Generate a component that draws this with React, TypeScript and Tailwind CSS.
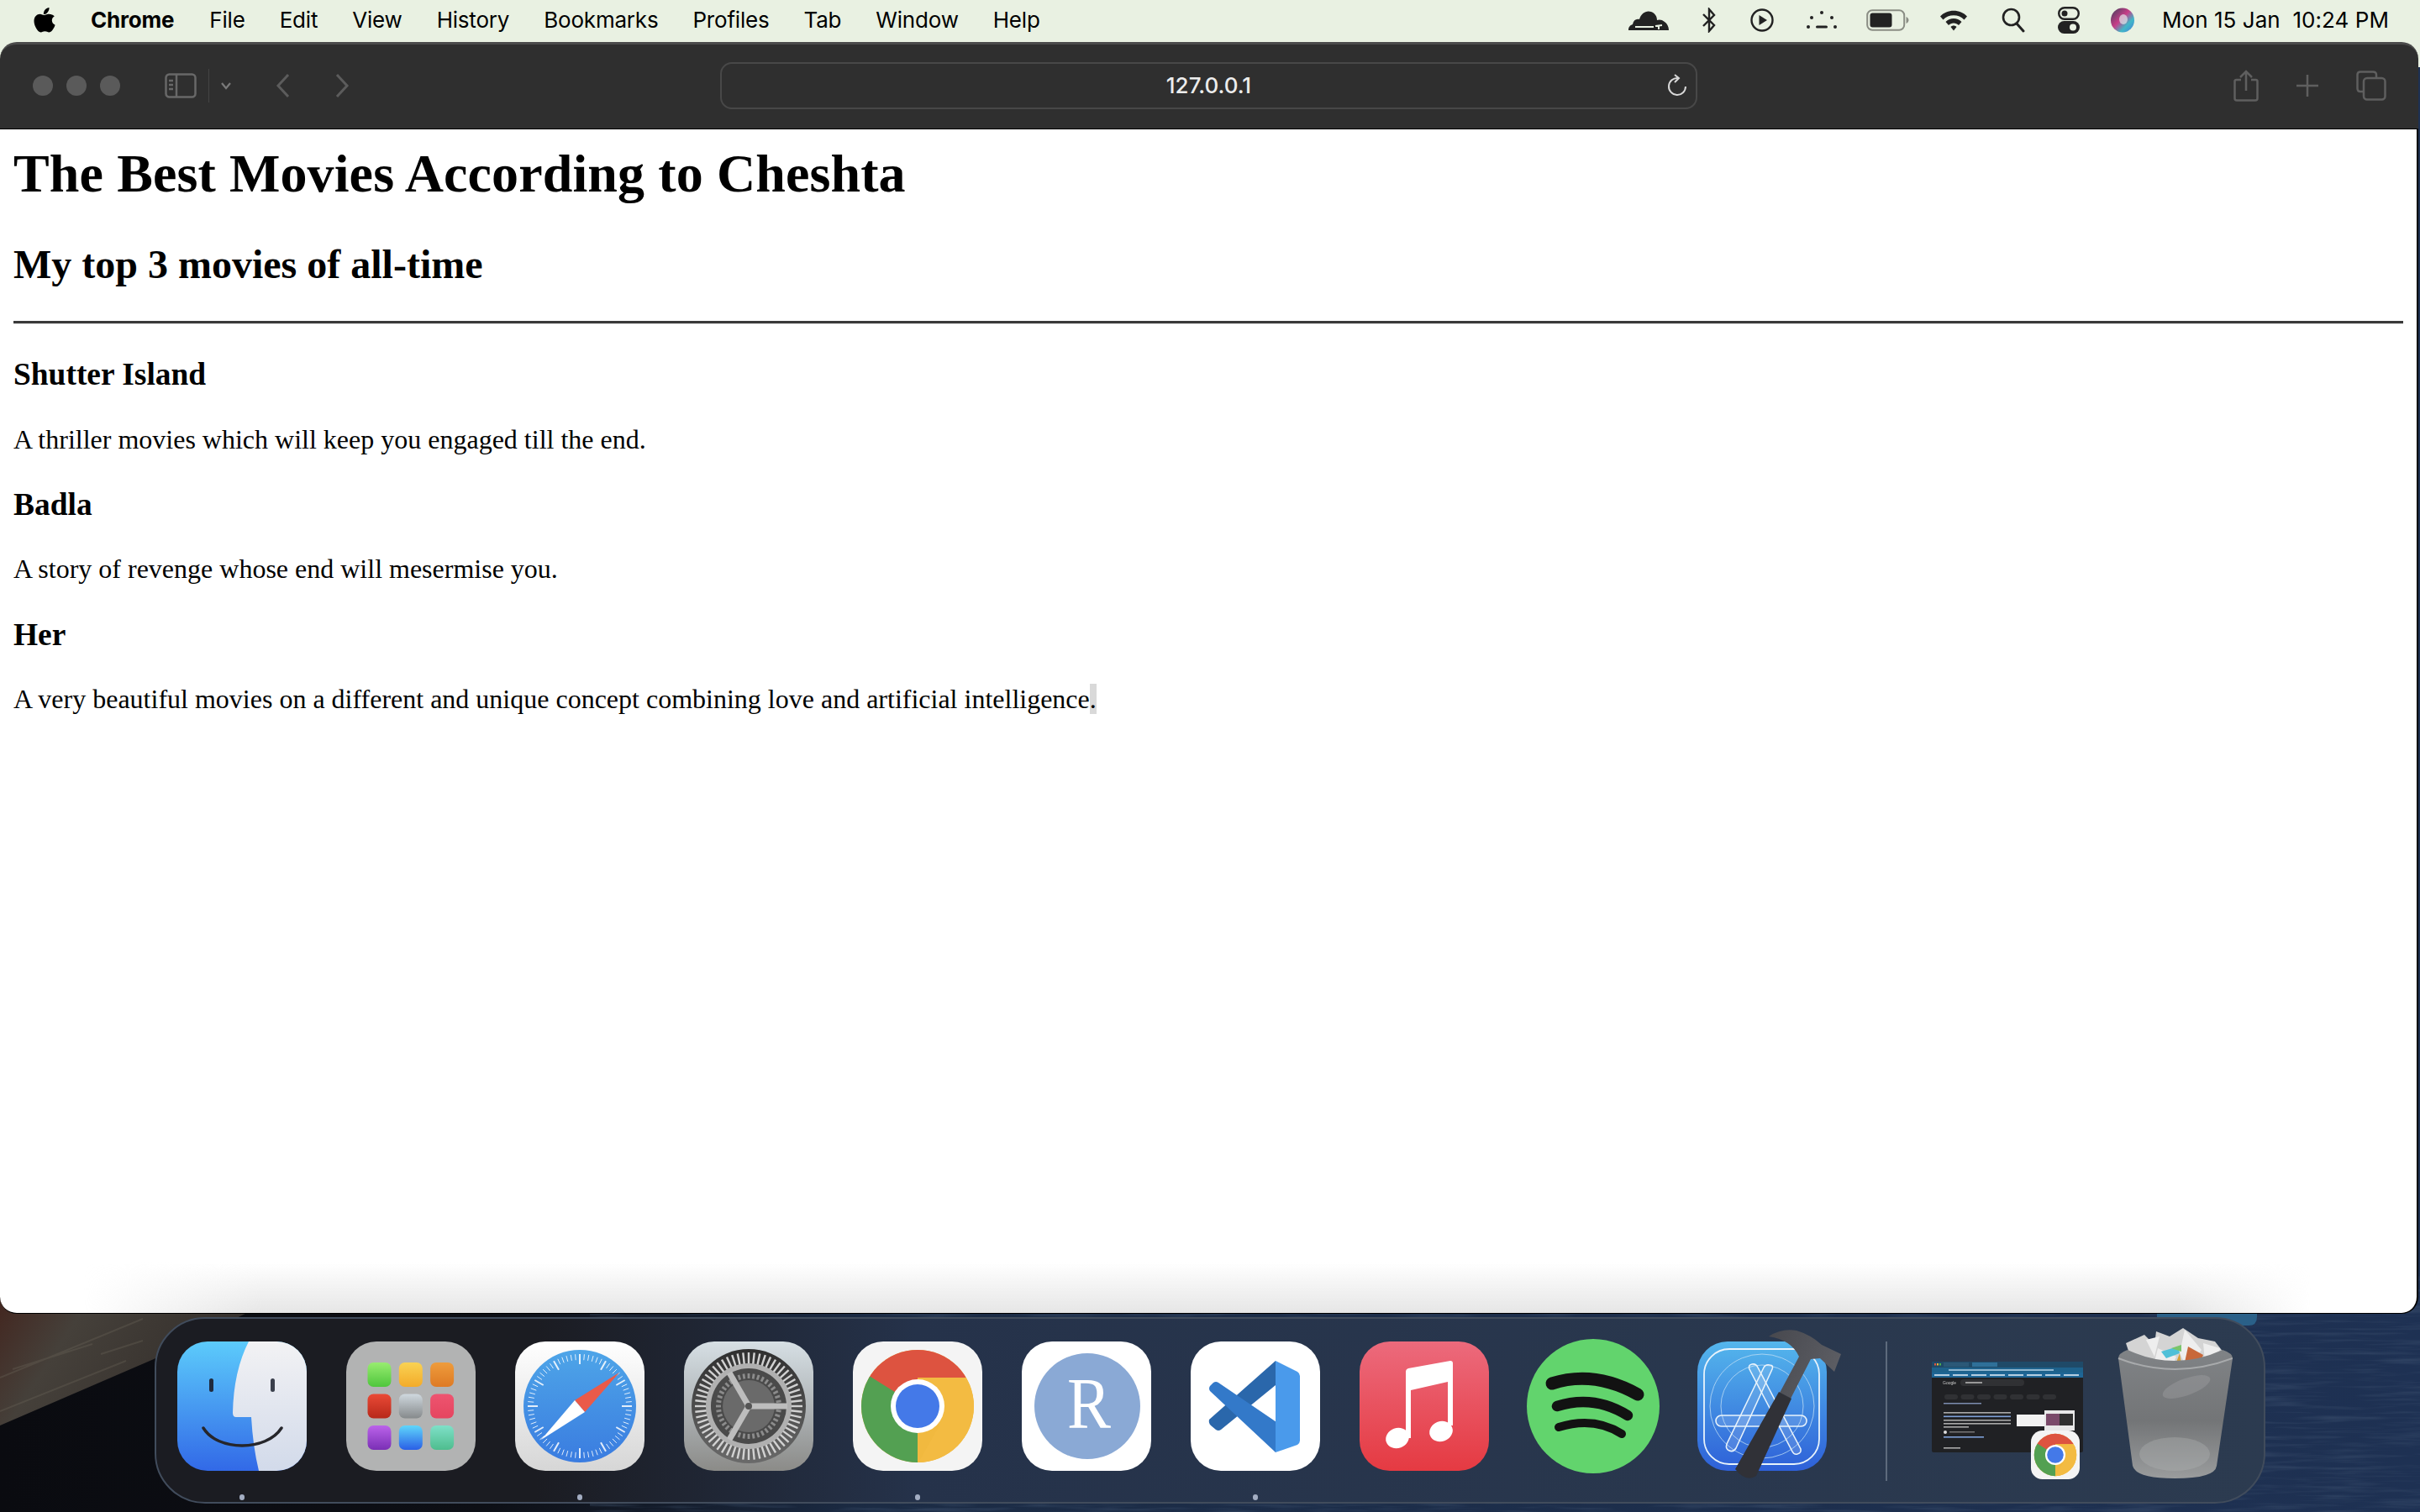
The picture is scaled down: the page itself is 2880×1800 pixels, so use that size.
import type { ReactNode } from 'react';

const menus = ['File', 'Edit', 'View', 'History', 'Bookmarks', 'Profiles', 'Tab', 'Window', 'Help'];

const padColors = [
  ['#98ec70', '#4fc63d'], ['#f9d253', '#f3ab2a'], ['#ee9c3c', '#de7a24'],
  ['#ea4a36', '#b7281a'], ['#cfd8de', '#868a8c'], ['#ee5470', '#e5455f'],
  ['#bb63ea', '#7a2fb5'], ['#5fd6fb', '#2a5fe6'], ['#7fe0c8', '#4ebd8e'],
];

function range(n: number) {
  return Array.from({ length: n }, (_, i) => i);
}

function polar(r: number, deg: number, c = 77) {
  const a = (deg * Math.PI) / 180;
  return { x: c + r * Math.cos(a), y: c + r * Math.sin(a) };
}

function Wallpaper() {
  return (
    <svg className="absolute inset-0" width="2880" height="1800" viewBox="0 0 2880 1800">
      <defs>
        <linearGradient id="wall" x1="0" x2="1" y1="0" y2="0">
          <stop offset="0" stopColor="#0a0b10" />
          <stop offset="0.2" stopColor="#0d0f15" />
          <stop offset="0.36" stopColor="#1b2b44" />
          <stop offset="1" stopColor="#1e3153" />
        </linearGradient>
        <linearGradient id="wood" x1="0" x2="1" y1="0" y2="0.3">
          <stop offset="0" stopColor="#43261f" />
          <stop offset="0.3" stopColor="#45403a" />
          <stop offset="1" stopColor="#302b28" />
        </linearGradient>
        <filter id="grain">
          <feTurbulence type="fractalNoise" baseFrequency="0.012 0.22" numOctaves="3" />
          <feColorMatrix values="0 0 0 0 0.06  0 0 0 0 0.1  0 0 0 0 0.18  0 0 0 1.6 -0.72" />
        </filter>
      </defs>
      <rect width="2880" height="1800" fill="url(#wall)" />
      <rect x="900" y="1540" width="1980" height="260" filter="url(#grain)" opacity="0.6" />
      <path d="M0 1540H340L183 1618L0 1697Z" fill="url(#wood)" />
      <path d="M0 1640L170 1570M15 1630L110 1600M0 1680L150 1620M120 1612L170 1596" stroke="#6a645a" strokeWidth="2" fill="none" opacity="0.35" />
      <path d="M2567 1560H2686V1568Q2686 1578 2676 1578H2567Z" fill="#2a6088" />
      <rect width="2880" height="80" fill="#e9f1e2" />
    </svg>
  );
}

function AppleLogo() {
  return (
    <svg width="26" height="32" viewBox="0 0 26 32">
      <path d="M18.5 1c.2 2.400-.7 4.300-1.900 5.700-1.200 1.500-3 2.500-4.700 2.300-.3-2.200.7-4.300 1.800-5.600C15 2 17 1 18.500 1Z" fill="#000" />
      <path d="M24.800 11.200c-1.700 1.100-3 2.800-3 5.100 0 2.700 1.700 4.600 3.800 5.400-.5 1.600-1.300 3.300-2.300 4.800-1.300 1.900-2.700 3.900-4.800 3.900-2 0-2.700-1.200-5-1.200-2.400 0-3.100 1.200-5 1.200-2.100 0-3.500-1.900-4.900-3.900C1.800 24 .5 20.500.5 17.100c0-5.400 3.500-8.300 7-8.300 2 0 3.600 1.300 4.800 1.300 1.200 0 3.100-1.400 5.300-1.400 1 0 4.600.1 7.200 2.500Z" fill="#000" />
    </svg>
  );
}

function MenuBar() {
  return (
    <div className="relative flex h-[48px] items-center text-[26px] leading-[32px] tracking-[-0.2px] text-black [font-family:Inter,'Liberation_Sans',sans-serif]">
      <div className="ml-[40px] w-[68px]">
        <AppleLogo />
      </div>
      <span className="mr-[42px] font-bold">Chrome</span>
      <div className="flex gap-[41px]">
        {menus.map((m) => (
          <span key={m}>{m}</span>
        ))}
      </div>
      <div className="ml-auto mr-[37px] flex items-center">
        <svg width="48" height="26" viewBox="0 0 48 26">
          <path d="M0 25c0-4 2-6 5-7 1-5 4-7 8-6 2-7 8-11 14-9 5 2 7 6 7 10 2-1 6-1 9 2 3 2 5 6 5 10Z" fill="#222" />
          <path d="M8 21H30M32 20l8-1M36 19v5" stroke="#e9f1e2" strokeWidth="2" fill="none" />
        </svg>
        <svg className="ml-[40px]" width="16" height="30" viewBox="0 0 16 30">
          <path d="M1 8L14 21L8 28V2L14 9L1 22" stroke="#222" strokeWidth="2.400" fill="none" />
        </svg>
        <svg className="ml-[41px]" width="28" height="28" viewBox="0 0 28 28">
          <circle cx="14" cy="14" r="12.500" stroke="#222" strokeWidth="2.400" fill="none" />
          <path d="M10.500 8L20 14L10.500 20Z" fill="#222" />
        </svg>
        <svg className="ml-[39px]" width="36" height="26" viewBox="0 0 36 26">
          <circle cx="18" cy="4" r="2" fill="#222" />
          <circle cx="6" cy="10" r="2" fill="#222" />
          <circle cx="30" cy="10" r="2" fill="#222" />
          <circle cx="2" cy="21" r="2" fill="#222" />
          <circle cx="34" cy="21" r="2" fill="#222" />
          <rect x="11" y="19.500" width="14" height="3" rx="1.500" fill="#222" />
        </svg>
        <svg className="ml-[35px]" width="51" height="26" viewBox="0 0 51 26">
          <rect x="1.200" y="1.200" width="44" height="23.600" rx="6" stroke="#8a8d84" strokeWidth="2" fill="none" />
          <rect x="4.500" y="4.500" width="26" height="17" rx="3" fill="#222" />
          <path d="M47.500 9c2 1 3 2.500 3 4s-1 3-3 4Z" fill="#8a8d84" />
        </svg>
        <svg className="ml-[36px]" width="34" height="26" viewBox="0 0 34 26">
          <path d="M1 8.500C9-.5 25-.5 33 8.500L29.500 12.500C23.500 5.500 10.500 5.500 4.500 12.500Z" fill="#222" />
          <path d="M7.500 15C12.500 9.500 21.500 9.500 26.500 15L23 19C20 15.500 14 15.500 11 19Z" fill="#222" />
          <path d="M13.500 21C15.500 19 18.500 19 20.500 21L17 25.500Z" fill="#222" />
        </svg>
        <svg className="ml-[40px]" width="28" height="30" viewBox="0 0 28 30">
          <circle cx="11.500" cy="11.500" r="9.500" stroke="#222" strokeWidth="2.600" fill="none" />
          <path d="M18 19L26 28" stroke="#222" strokeWidth="3" strokeLinecap="round" />
        </svg>
        <svg className="ml-[39px]" width="26" height="32" viewBox="0 0 26 32">
          <rect x="1.200" y="1.200" width="23.600" height="13.600" rx="6.800" stroke="#222" strokeWidth="2.400" fill="none" />
          <circle cx="8" cy="8" r="3.500" fill="#222" />
          <rect y="17" width="26" height="15" rx="7.500" fill="#222" />
          <circle cx="18" cy="24.500" r="4" fill="#e9f1e2" />
        </svg>
        <svg className="ml-[37px]" width="28" height="30" viewBox="0 0 28 30">
          <defs>
            <linearGradient id="siri" x1="0" x2="1" y1="0" y2="1">
              <stop offset="0" stopColor="#3c3f5a" />
              <stop offset="0.45" stopColor="#c83d88" />
              <stop offset="0.7" stopColor="#3fb8c8" />
              <stop offset="1" stopColor="#4a78d8" />
            </linearGradient>
          </defs>
          <ellipse cx="14" cy="15" rx="14" ry="14.500" fill="url(#siri)" />
          <ellipse cx="15" cy="14" rx="5" ry="6" fill="#dfe8ea" opacity="0.7" />
        </svg>
        <span className="ml-[33px] w-[270px] whitespace-pre text-[26px] tracking-[0.05px]">Mon 15 Jan  10:24 PM</span>
      </div>
    </div>
  );
}

function Toolbar() {
  return (
    <div className="flex h-[104px] items-center rounded-t-[20px] border-t-[3px] border-b border-t-[#4b4b4b] border-b-black bg-[#2f2f2f] pb-[3px]">
      <div className="flex w-[857px] items-center">
        <div className="ml-[39px] flex gap-[16px]">
          <div className="h-[24px] w-[24px] rounded-full bg-[#5a5a5a]" />
          <div className="h-[24px] w-[24px] rounded-full bg-[#5a5a5a]" />
          <div className="h-[24px] w-[24px] rounded-full bg-[#5a5a5a]" />
        </div>
        <svg className="ml-[53px]" width="38" height="30" viewBox="0 0 38 30">
          <rect x="1.500" y="1.500" width="35" height="27" rx="4" stroke="#686868" strokeWidth="2.500" fill="none" />
          <path d="M14 2V28" stroke="#686868" strokeWidth="2.500" />
          <path d="M5 9H10M5 14H10M5 19H10" stroke="#686868" strokeWidth="2.500" />
        </svg>
        <div className="ml-[14px] h-[40px] w-px bg-[#444]" />
        <svg className="ml-[13px]" width="14" height="10" viewBox="0 0 14 10">
          <path d="M2 2L7 8L12 2" stroke="#7a7a7a" strokeWidth="2.200" fill="none" />
        </svg>
        <svg className="ml-[52px]" width="18" height="30" viewBox="0 0 18 30">
          <path d="M15 2L3 15L15 28" stroke="#5c5c5c" strokeWidth="3" fill="none" />
        </svg>
        <svg className="ml-[52px]" width="18" height="30" viewBox="0 0 18 30">
          <path d="M3 2L15 15L3 28" stroke="#5c5c5c" strokeWidth="3" fill="none" />
        </svg>
      </div>
      <div className="relative flex h-[56px] w-[1163px] items-center justify-center rounded-[14px] border-2 border-[#484848] text-[26px] font-medium text-[#ececec] [font-family:Inter,'Liberation_Sans',sans-serif]">
        127.0.0.1
        <svg className="absolute right-[10px] top-[12px]" width="24" height="30" viewBox="0 0 24 30">
          <path d="M13 5A10 10 0 1 0 22 15" stroke="#d8d8d8" strokeWidth="2" fill="none" />
          <path d="M9 1L14 5L9 10" stroke="#d8d8d8" strokeWidth="2" fill="none" />
        </svg>
      </div>
      <div className="flex flex-1 items-center justify-end pr-[38px]">
        <svg width="30" height="38" viewBox="0 0 30 38">
          <path d="M9 12H3.500Q1.500 12 1.500 14V34Q1.500 36.500 4 36.500H26Q28.500 36.500 28.500 34V14Q28.500 12 26.500 12H21" stroke="#5f5f5f" strokeWidth="2.500" fill="none" />
          <path d="M15 25V2M8 9L15 2L22 9" stroke="#5f5f5f" strokeWidth="2.500" fill="none" />
        </svg>
        <svg className="ml-[44px]" width="28" height="28" viewBox="0 0 28 28">
          <path d="M14 1V27M1 14H27" stroke="#5f5f5f" strokeWidth="2.500" />
        </svg>
        <svg className="ml-[44px]" width="36" height="36" viewBox="0 0 36 36">
          <path d="M8 25H5Q1.500 25 1.500 21V5Q1.500 1.500 5 1.500H20Q24 1.500 24 5V9" stroke="#5f5f5f" strokeWidth="2.500" fill="none" />
          <rect x="9" y="9" width="25.500" height="25.500" rx="4" stroke="#5f5f5f" strokeWidth="2.500" fill="none" />
        </svg>
      </div>
    </div>
  );
}

function Page() {
  return (
    <div className="relative flex-1 overflow-hidden rounded-b-[20px] border-b border-r-2 border-black bg-white font-['Liberation_Serif',serif] text-black">
      <div className="px-[16px] pt-[16px]">
        <h1 className="text-[64px] font-bold leading-[74px] tracking-[0.11px]">The Best Movies According to Cheshta</h1>
        <h2 className="mt-[43px] text-[48px] font-bold leading-[55px]">My top 3 movies of all-time</h2>
        <hr className="mt-[40px] h-[4px] border-0 border-t-[3px] border-t-[#3a3a3a] bg-[#ddd]" />
        <h3 className="mt-[38px] text-[37.44px] font-bold leading-[43px]">Shutter Island</h3>
        <p className="mt-[38px] text-[32px] leading-[37px]">A thriller movies which will keep you engaged till the end.</p>
        <h3 className="mt-[37px] text-[37.44px] font-bold leading-[43px]">Badla</h3>
        <p className="mt-[37px] text-[32px] leading-[37px]">A story of revenge whose end will mesermise you.</p>
        <h3 className="mt-[38px] text-[37.44px] font-bold leading-[43px]">Her</h3>
        <p className="mt-[37px] text-[32px] leading-[37px]">
          A very beautiful movies on a different and unique concept combining love and artificial intelligence
          <span className="bg-[#d9d9d9]">.</span>
        </p>
      </div>
      {/* dock shadow on the window */}
      <div className="absolute bottom-0 left-[100px] h-[60px] w-[2650px] bg-gradient-to-t from-[#e6e6e6] to-transparent [mask-image:linear-gradient(90deg,transparent,black_8%,black_94%,transparent)]" />
    </div>
  );
}

function Finder() {
  return (
    <svg width="154" height="154" viewBox="0 0 154 154">
      <defs>
        <linearGradient id="fb" x1="0" x2="0" y1="0" y2="1">
          <stop offset="0" stopColor="#5ccbfb" />
          <stop offset="1" stopColor="#3269e7" />
        </linearGradient>
        <linearGradient id="fw" x1="0" x2="0" y1="0" y2="1">
          <stop offset="0" stopColor="#f2f2f4" />
          <stop offset="1" stopColor="#d2daea" />
        </linearGradient>
        <clipPath id="fc">
          <rect width="154" height="154" rx="36" />
        </clipPath>
      </defs>
      <g clipPath="url(#fc)">
        <rect width="154" height="154" fill="url(#fb)" />
        <path d="M85 0H154V154H97Q90 125 88 90H70Q66 90 66 85Q67 35 85 0Z" fill="url(#fw)" />
        <rect x="38" y="44" width="5" height="16" rx="2.500" fill="#1f2a3e" />
        <rect x="111" y="44" width="5" height="16" rx="2.500" fill="#3a3f4c" />
        <path d="M31 103C48 131 106 131 124 103" stroke="#26262b" strokeWidth="3.500" strokeLinecap="round" fill="none" />
      </g>
    </svg>
  );
}

function Launchpad() {
  return (
    <svg width="154" height="154" viewBox="0 0 154 154">
      <defs>
        {padColors.map((c, i) => (
          <linearGradient key={i} id={`pad${i}`} x1="0" x2="0" y1="0" y2="1">
            <stop offset="0" stopColor={c[0]} />
            <stop offset="1" stopColor={c[1]} />
          </linearGradient>
        ))}
      </defs>
      <rect width="154" height="154" rx="36" fill="#b2b3b3" />
      {padColors.map((_, i) => (
        <rect
          key={i}
          x={25.5 + (i % 3) * 37.3}
          y={25 + Math.floor(i / 3) * 37.5}
          width="28"
          height="29"
          rx="7"
          fill={`url(#pad${i})`}
        />
      ))}
    </svg>
  );
}

function Safari() {
  return (
    <svg width="154" height="154" viewBox="0 0 154 154">
      <defs>
        <linearGradient id="sb" x1="0" x2="0" y1="0" y2="1">
          <stop offset="0" stopColor="#ffffff" />
          <stop offset="1" stopColor="#d6d6d6" />
        </linearGradient>
        <linearGradient id="sc" x1="0" x2="0" y1="0" y2="1">
          <stop offset="0" stopColor="#4ea5e8" />
          <stop offset="1" stopColor="#3a7ce0" />
        </linearGradient>
      </defs>
      <rect width="154" height="154" rx="36" fill="url(#sb)" />
      <circle cx="77" cy="77" r="67" fill="url(#sc)" />
      {range(72).map((i) => {
        const a = polar(62, i * 5);
        const b = polar(i % 6 === 0 ? 50 : 55, i * 5);
        return <line key={i} x1={a.x} y1={a.y} x2={b.x} y2={b.y} stroke="#fff" strokeWidth={i % 6 === 0 ? 2 : 1} opacity="0.85" />;
      })}
      <path d="M124 37L71 70L83 84Z" fill="#ea5a49" />
      <path d="M31 117L71 70L83 84Z" fill="#fff" />
    </svg>
  );
}

function Settings() {
  return (
    <svg width="154" height="154" viewBox="0 0 154 154">
      <defs>
        <linearGradient id="gb" x1="0" x2="0" y1="0" y2="1">
          <stop offset="0" stopColor="#d6dfe4" />
          <stop offset="0.6" stopColor="#a9adaf" />
          <stop offset="1" stopColor="#8b8b88" />
        </linearGradient>
        <linearGradient id="gr" x1="0" x2="0" y1="0" y2="1">
          <stop offset="0" stopColor="#2f2f2f" />
          <stop offset="1" stopColor="#6a6a6a" />
        </linearGradient>
      </defs>
      <rect width="154" height="154" rx="36" fill="url(#gb)" />
      <circle cx="77" cy="77" r="68" fill="url(#gr)" />
      {range(60).map((i) => {
        const a = polar(64, i * 6);
        const b = polar(50, i * 6);
        return <line key={i} x1={a.x} y1={a.y} x2={b.x} y2={b.y} stroke="#d2d2d2" strokeWidth="2.400" />;
      })}
      <circle cx="77" cy="77" r="51" fill="#b0b0b0" />
      <circle cx="77" cy="77" r="45" fill="#4a4a4a" />
      {range(40).map((i) => {
        const a = polar(39, i * 9);
        const b = polar(33, i * 9);
        return <line key={i} x1={a.x} y1={a.y} x2={b.x} y2={b.y} stroke="#8c8c8c" strokeWidth="2.800" />;
      })}
      <circle cx="77" cy="77" r="31" fill="#6a6a6a" />
      {[0, 120, 240].map((d) => {
        const e = polar(46, d);
        return <line key={d} x1="77" y1="77" x2={e.x} y2={e.y} stroke="#bdbdbd" strokeWidth="7" />;
      })}
      <circle cx="77" cy="77" r="4" fill="#555" />
    </svg>
  );
}

function ChromeMark({ id }: { id: string }) {
  return (
    <g>
      <defs>
        <clipPath id={id}>
          <circle cx="77" cy="77" r="67" />
        </clipPath>
      </defs>
      <g clipPath={`url(#${id})`}>
        <rect width="154" height="154" fill="#f1b93f" />
        <path d="M77 77L20 44L0 30V-10H154V43H77Z" fill="#dd5340" />
        <path d="M77 77L21 42L0 40V154H77L77 145Z" fill="#53a052" />
        <path d="M77 77L103 100L77 146L77 160H160V43H77Z" fill="#f3bb42" />
      </g>
      <circle cx="77" cy="77" r="32" fill="#fff" />
      <circle cx="77" cy="77" r="26" fill="#4479e8" />
    </g>
  );
}

function ChromeIcon() {
  return (
    <svg width="154" height="154" viewBox="0 0 154 154">
      <rect width="154" height="154" rx="36" fill="#f4f4f4" />
      <ChromeMark id="chromeA" />
    </svg>
  );
}

function RIcon() {
  return (
    <svg width="154" height="154" viewBox="0 0 154 154">
      <rect width="154" height="154" rx="36" fill="#fff" />
      <circle cx="78" cy="77" r="63" fill="#8aa9d5" />
      <text x="54" y="103" fontFamily="'Liberation Serif', serif" fontSize="86" textLength="52" lengthAdjust="spacingAndGlyphs" fill="#fff">R</text>
    </svg>
  );
}

function VsCode() {
  return (
    <svg width="154" height="154" viewBox="0 0 154 154">
      <rect width="154" height="154" rx="36" fill="#fff" />
      <path d="M101 23L22 93Q21 97 24 100L30 105Q33 107 36 105L101 52Z" fill="#2a67ab" />
      <path d="M33 49Q30 47 27 49L23 53Q21 56 23 59L101 132L108 100Z" fill="#3379c9" />
      <path d="M101 23L127 36Q130 38 130 41V118Q130 121 127 123L101 132Z" fill="#4a9aeb" />
    </svg>
  );
}

function Music() {
  return (
    <svg width="154" height="154" viewBox="0 0 154 154">
      <defs>
        <linearGradient id="mb" x1="0" x2="0" y1="0" y2="1">
          <stop offset="0" stopColor="#ec6a7c" />
          <stop offset="1" stopColor="#e53a42" />
        </linearGradient>
      </defs>
      <rect width="154" height="154" rx="36" fill="url(#mb)" />
      <path d="M55 36Q55 33 58 32L108 23Q111 23 111 26V100H105V48L61 58V115H55Z" fill="#fff" />
      <ellipse cx="45" cy="115" rx="14" ry="12" fill="#fff" transform="rotate(-20 45 115)" />
      <ellipse cx="97" cy="107" rx="14" ry="12" fill="#fff" transform="rotate(-20 97 107)" />
    </svg>
  );
}

function Spotify() {
  return (
    <svg className="-my-[3px]" width="158" height="160" viewBox="0 0 158 160">
      <ellipse cx="79" cy="80" rx="79" ry="80" fill="#62d46d" />
      <path d="M30 53Q80 37 132 66" stroke="#121212" strokeWidth="15" strokeLinecap="round" fill="none" />
      <path d="M36 80Q80 66 120 91" stroke="#121212" strokeWidth="12.500" strokeLinecap="round" fill="none" />
      <path d="M38 105Q80 92 113 113" stroke="#121212" strokeWidth="10" strokeLinecap="round" fill="none" />
    </svg>
  );
}

function Xcode() {
  return (
    <svg className="overflow-visible" width="154" height="154" viewBox="0 0 154 154">
      <defs>
        <linearGradient id="xb" x1="0" x2="0" y1="0" y2="1">
          <stop offset="0" stopColor="#54b6ec" />
          <stop offset="1" stopColor="#2e60d8" />
        </linearGradient>
        <linearGradient id="xh" x1="0" x2="1" y1="0" y2="0.4">
          <stop offset="0" stopColor="#47484e" />
          <stop offset="1" stopColor="#5c5d63" />
        </linearGradient>
      </defs>
      <rect width="154" height="154" rx="36" fill="url(#xb)" />
      <rect x="8" y="9" width="137" height="137" rx="30" stroke="#e8f3fb" strokeWidth="1.800" fill="none" />
      <circle cx="77" cy="77" r="62" stroke="#bcdcf4" strokeWidth="0.800" fill="none" />
      <circle cx="77" cy="77" r="49" stroke="#bcdcf4" strokeWidth="0.800" fill="none" />
      <g stroke="#e8f3fb" strokeWidth="1.600" fill="#ffffff22">
        <path d="M62 33Q60 28 65 27Q70 26 72 31L123 128Q124 133 119 134Q115 135 113 131Z" />
        <path d="M89 33Q91 28 86 28Q81 27 79 31L35 122Q33 128 38 130Q43 132 46 127Z" />
        <rect x="22" y="88" width="108" height="13" rx="6.500" />
      </g>
      <path d="M98 61L121 18Q112 -2 85 -6Q100 -16 118 -13Q135 -8 148 4L171 15L163 36L146 20L135 21L111 68Z" fill="url(#xh)" />
      <path d="M97 60L112 68L70 160Q58 168 45 152Z" fill="#303137" />
    </svg>
  );
}

function Thumbnail() {
  return (
    <div className="relative h-[140px] w-[180px]">
      <svg className="overflow-visible blur-[0.4px]" width="180" height="108" viewBox="0 0 180 108">
        <rect width="180" height="108" rx="2" fill="#202124" />
        <rect width="180" height="7" fill="#1f4a68" />
        <rect y="7" width="180" height="6" fill="#1e628c" />
        <rect y="13" width="180" height="6" fill="#1e6696" />
        <rect x="3" y="2" width="2" height="2.500" fill="#e0533f" />
        <rect x="6" y="2" width="2" height="2.500" fill="#e7b23c" />
        <rect x="9" y="2" width="2" height="2.500" fill="#4caf50" />
        <rect x="14" y="1" width="30" height="5" fill="#2b5877" />
        <rect x="48" y="1" width="30" height="5" fill="#2f7099" />
        <rect x="20" y="9" width="125" height="2" fill="#8fb6cf" />
        {range(8).map((i) => (
          <rect key={i} x={3 + i * 22} y="15" width="18" height="2" fill="#b5cee0" />
        ))}
        <text x="13" y="27" fontFamily="'Liberation Sans', sans-serif" fontSize="5" fill="#c8c8c8">Google</text>
        <rect x="34" y="21" width="76" height="8" rx="4" fill="#303134" />
        <rect x="40" y="24" width="20" height="2" fill="#999" />
        {range(7).map((i) => (
          <rect key={i} x={15 + i * 19.500} y="39" width="16" height="6" rx="3" fill="#303134" />
        ))}
        <rect x="14" y="49" width="45" height="1.500" fill="#7c8db0" />
        {[60, 64.500, 69, 73, 77].map((y, i) => (
          <rect key={y} x="14" y={y} width={i === 4 ? 30 : 80} height="1.600" fill={i === 1 ? '#7ea0d8' : '#a9a9a9'} />
        ))}
        <circle cx="16" cy="84" r="2" fill="#ddd" />
        <rect x="21" y="83" width="30" height="1.500" fill="#777" />
        <rect x="14" y="89" width="48" height="1.600" fill="#7ea0d8" />
        <rect x="14" y="102" width="20" height="1.600" fill="#aaa" />
        <rect x="101" y="63" width="34" height="14" fill="#f2f2f2" />
        <rect x="134" y="58" width="36" height="24" fill="#e8e8e8" />
        <rect x="136" y="62" width="16" height="14" fill="#7a4a6a" />
        <rect x="152" y="62" width="16" height="14" fill="#303030" />
      </svg>
      <svg className="absolute left-[118px] top-[82px]" width="58" height="58" viewBox="0 0 154 154">
        <rect width="154" height="154" rx="36" fill="#f4f4f4" />
        <ChromeMark id="chromeB" />
      </svg>
    </div>
  );
}

function Trash() {
  return (
    <svg width="137" height="180" viewBox="0 0 137 180">
      <defs>
        <linearGradient id="tg" x1="0" x2="0" y1="0" y2="1">
          <stop offset="0" stopColor="#808386" />
          <stop offset="0.55" stopColor="#737577" />
          <stop offset="1" stopColor="#9a9c9d" />
        </linearGradient>
      </defs>
      <path d="M14 30L10 18L32 8L44 20L46 4L62 10L78 0L96 12L116 16L130 34L112 54H26Z" fill="#d4d4d4" />
      <path d="M34 14L50 10L44 34ZM48 24L70 34L62 52L42 48ZM80 2L100 26L84 50L74 30ZM102 18L122 24L118 44L104 40Z" fill="#eeeeee" />
      <path d="M52 28L72 22L74 30L58 36Z" fill="#4fc0d8" />
      <path d="M64 24L76 20L76 28Z" fill="#7ac56a" />
      <path d="M84 22L102 32L94 52L78 50Z" fill="#c8683a" />
      <path d="M68 46L74 30L78 54Z" fill="#d8a038" />
      <path d="M1 36Q1 30 12 26Q68 52 125 26Q137 30 137 36L118 164Q116 179 68 179Q22 179 18 164Z" fill="url(#tg)" />
      <path d="M1 36Q68 62 137 36" stroke="#a8aaac" strokeWidth="2" fill="none" />
      <ellipse cx="82" cy="70" rx="30" ry="10" fill="#a5a7a9" opacity="0.35" transform="rotate(-20 82 70)" />
      <ellipse cx="68" cy="150" rx="42" ry="20" fill="#adafb0" opacity="0.4" />
    </svg>
  );
}

function DockItem({ children, running }: { children: ReactNode; running?: boolean }) {
  return (
    <div className="flex w-[154px] flex-col items-center">
      {children}
      {running && <div className="mt-[28px] h-[7px] w-[6px] rounded-full bg-[#a3adc2]" />}
    </div>
  );
}

function Dock() {
  return (
    <div className="relative ml-[184px] mt-[4px] flex h-[222px] w-[2512px] rounded-[60px] border-2 border-[#414c5c] bg-[linear-gradient(90deg,#1b1c22_0%,#1b1c22_18%,#25324a_36%,#2c3b50_100%)] pl-[25px] pt-[27px]">
      <div className="flex gap-[47px]">
        <DockItem running><Finder /></DockItem>
        <DockItem><Launchpad /></DockItem>
        <DockItem running><Safari /></DockItem>
        <DockItem><Settings /></DockItem>
        <DockItem running><ChromeIcon /></DockItem>
        <DockItem><RIcon /></DockItem>
        <DockItem running><VsCode /></DockItem>
        <DockItem><Music /></DockItem>
        <DockItem><Spotify /></DockItem>
        <DockItem><Xcode /></DockItem>
      </div>
      <div className="ml-[70px] h-[166px] w-[2px] bg-[#5d6a7c]" />
      <div className="ml-[53px] mt-[24px]">
        <Thumbnail />
      </div>
      <div className="-mt-[16px] ml-[41px]">
        <Trash />
      </div>
    </div>
  );
}

export default function App() {
  return (
    <div className="relative flex h-[1800px] w-[2880px] flex-col overflow-hidden">
      <Wallpaper />
      <MenuBar />
      <div className="relative mr-[2px] mt-[2px] flex h-[1514px] flex-col">
        <Toolbar />
        <Page />
      </div>
      <Dock />
    </div>
  );
}
